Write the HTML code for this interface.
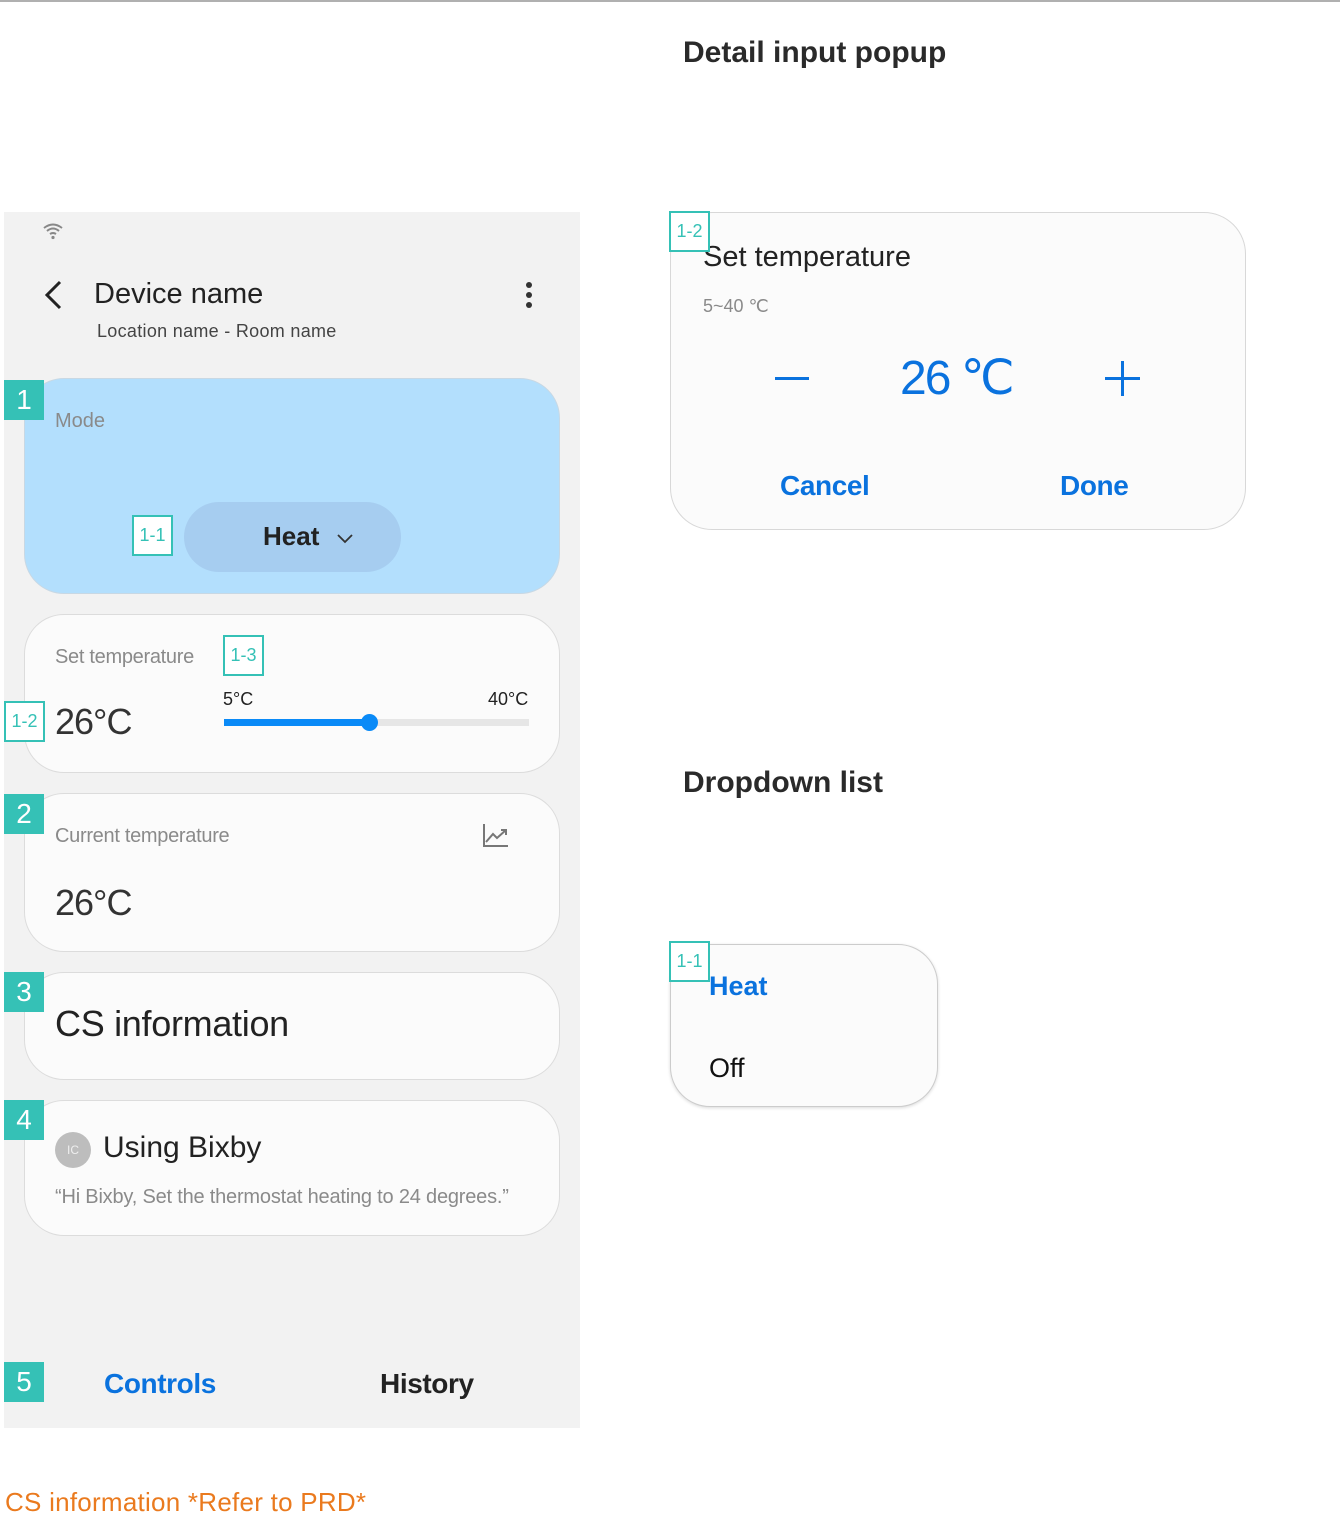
<!DOCTYPE html>
<html><head><meta charset="utf-8"><style>
*{margin:0;padding:0;box-sizing:border-box}
body{width:1340px;height:1536px;background:#fff;position:relative;overflow:hidden;font-family:"Liberation Sans",sans-serif;color:#222}
.a{position:absolute;line-height:1;white-space:nowrap}
.card{position:absolute;left:24px;width:536px;background:#fbfbfb;border:1px solid #dcdcdc;border-radius:40px}
.badge{position:absolute;left:4px;width:40px;height:40px;background:#35c1b6;color:#fff;font-size:28px;text-align:center;line-height:40px}
.lbl{position:absolute;width:41px;height:41px;border:2px solid #35c1b6;background:#fff;color:#35c1b6;font-size:18px;text-align:center;line-height:37px}
.g{color:#8a8a8a}
.b{color:#0a72de}
</style></head><body>
<div style="position:absolute;left:0;top:0;width:1340px;height:2px;background:#b0b0b0"></div>

<div style="position:absolute;left:4px;top:212px;width:576px;height:1216px;background:#f2f2f2"></div>
<svg style="position:absolute;left:42px;top:222px" width="22" height="18" viewBox="0 0 22 18"><path d="M2 6 Q11 -1 20 6 M5 9 Q11 4 17 9 M8 12 Q11 10 14 12" stroke="#888" stroke-width="2" fill="none"/><circle cx="11" cy="15.5" r="1.6" fill="#888"/></svg>
<svg style="position:absolute;left:40px;top:280px" width="26" height="30" viewBox="0 0 26 30"><path d="M20 2 L7 15 L20 28" stroke="#222" stroke-width="3" fill="none"/></svg>
<div class="a" style="left:94px;top:280px;font-size:29px">Device name</div>
<div class="a" style="left:97px;top:322px;font-size:18px;color:#444;letter-spacing:0.3px">Location name - Room name</div>
<svg style="position:absolute;left:523px;top:281px" width="12" height="30"><circle cx="6" cy="4" r="3" fill="#333"/><circle cx="6" cy="14" r="3" fill="#333"/><circle cx="6" cy="24" r="3" fill="#333"/></svg>

<div class="card" style="top:378px;height:216px;background:#b3dffd;border-color:#c8d8e4"></div>
<div class="badge" style="top:380px">1</div>
<div class="a g" style="left:55px;top:411px;font-size:20px">Mode</div>
<div style="position:absolute;left:184px;top:502px;width:217px;height:70px;border-radius:35px;background:#a6cdf0"></div>
<div class="a" style="left:263px;top:523px;font-size:26px;font-weight:bold">Heat</div>
<svg style="position:absolute;left:336px;top:532px" width="18" height="12"><path d="M2 3 L9 10 L16 3" stroke="#333" stroke-width="1.8" fill="none"/></svg>
<div class="lbl" style="left:132px;top:515px">1-1</div>

<div class="card" style="top:614px;height:159px"></div>
<div class="a g" style="left:55px;top:647px;font-size:20px;letter-spacing:-0.3px">Set temperature</div>
<div class="lbl" style="left:223px;top:635px">1-3</div>
<div class="lbl" style="left:4px;top:701px">1-2</div>
<div class="a" style="left:55px;top:704px;font-size:36px;letter-spacing:-1px;color:#333">26°C</div>
<div class="a" style="left:223px;top:690px;font-size:18px">5°C</div>
<div class="a" style="left:488px;top:690px;font-size:18px">40°C</div>
<div style="position:absolute;left:224px;top:719px;width:305px;height:7px;background:#e6e6e6"></div>
<div style="position:absolute;left:224px;top:719px;width:146px;height:7px;background:#0a8af7"></div>
<div style="position:absolute;left:361px;top:714px;width:17px;height:17px;border-radius:50%;background:#0a8af7"></div>

<div class="card" style="top:793px;height:159px"></div>
<div class="badge" style="top:794px">2</div>
<div class="a g" style="left:55px;top:826px;font-size:20px;letter-spacing:-0.3px">Current temperature</div>
<svg style="position:absolute;left:482px;top:822px" width="28" height="26"><path d="M2 2 V24 H26 M4 20 L11 12 L15 16 L24 8 M19 8 H24 V13" stroke="#777" stroke-width="2" fill="none"/></svg>
<div class="a" style="left:55px;top:885px;font-size:36px;letter-spacing:-1px;color:#333">26°C</div>

<div class="card" style="top:972px;height:108px"></div>
<div class="badge" style="top:972px">3</div>
<div class="a" style="left:55px;top:1006px;font-size:36px;letter-spacing:-0.3px">CS information</div>

<div class="card" style="top:1100px;height:136px"></div>
<div class="badge" style="top:1100px">4</div>
<div style="position:absolute;left:55px;top:1132px;width:36px;height:36px;border-radius:50%;background:#bdbdbd;color:#eee;font-size:12px;text-align:center;line-height:36px">IC</div>
<div class="a" style="left:103px;top:1133px;font-size:30px">Using Bixby</div>
<div class="a g" style="left:55px;top:1187px;font-size:20px;letter-spacing:-0.2px">“Hi Bixby, Set the thermostat heating to 24 degrees.”</div>

<div class="badge" style="top:1362px">5</div>
<div class="a b" style="left:104px;top:1370px;font-size:28px;font-weight:bold;letter-spacing:-0.4px">Controls</div>
<div class="a" style="left:380px;top:1370px;font-size:28px;font-weight:bold;letter-spacing:-0.4px">History</div>

<div class="a" style="left:5px;top:1489px;font-size:26px;color:#ea7a1e;letter-spacing:0.25px">CS information *Refer to PRD*</div>

<div class="a" style="left:683px;top:38px;font-size:30px;font-weight:bold;color:#2a2a2a">Detail input popup</div>
<div style="position:absolute;left:670px;top:212px;width:576px;height:318px;background:#fbfbfb;border:1px solid #d8d8d8;border-radius:42px"></div>
<div class="a" style="left:703px;top:243px;font-size:29px">Set temperature</div>
<div class="lbl" style="left:669px;top:211px">1-2</div>
<div class="a g" style="left:703px;top:297px;font-size:18px">5~40 ℃</div>
<div style="position:absolute;left:775px;top:377px;width:34px;height:3px;background:#0a72de"></div>
<div class="a b" style="left:900px;top:355px;font-size:48px;letter-spacing:-2px">26 ℃</div>
<div style="position:absolute;left:1105px;top:377px;width:35px;height:3px;background:#0a72de"></div>
<div style="position:absolute;left:1121px;top:361px;width:3px;height:35px;background:#0a72de"></div>
<div class="a b" style="left:780px;top:472px;font-size:28px;font-weight:bold;letter-spacing:-0.4px">Cancel</div>
<div class="a b" style="left:1060px;top:472px;font-size:28px;font-weight:bold;letter-spacing:-0.4px">Done</div>

<div class="a" style="left:683px;top:768px;font-size:30px;font-weight:bold;color:#2a2a2a">Dropdown list</div>
<div style="position:absolute;left:670px;top:944px;width:268px;height:163px;background:#fbfbfb;border:1px solid #ccc;border-radius:40px;box-shadow:0 1px 3px rgba(0,0,0,.15)"></div>
<div class="a b" style="left:709px;top:973px;font-size:27px;font-weight:bold">Heat</div>
<div class="a" style="left:709px;top:1055px;font-size:27px;color:#111">Off</div>
<div class="lbl" style="left:669px;top:941px">1-1</div>
</body></html>
